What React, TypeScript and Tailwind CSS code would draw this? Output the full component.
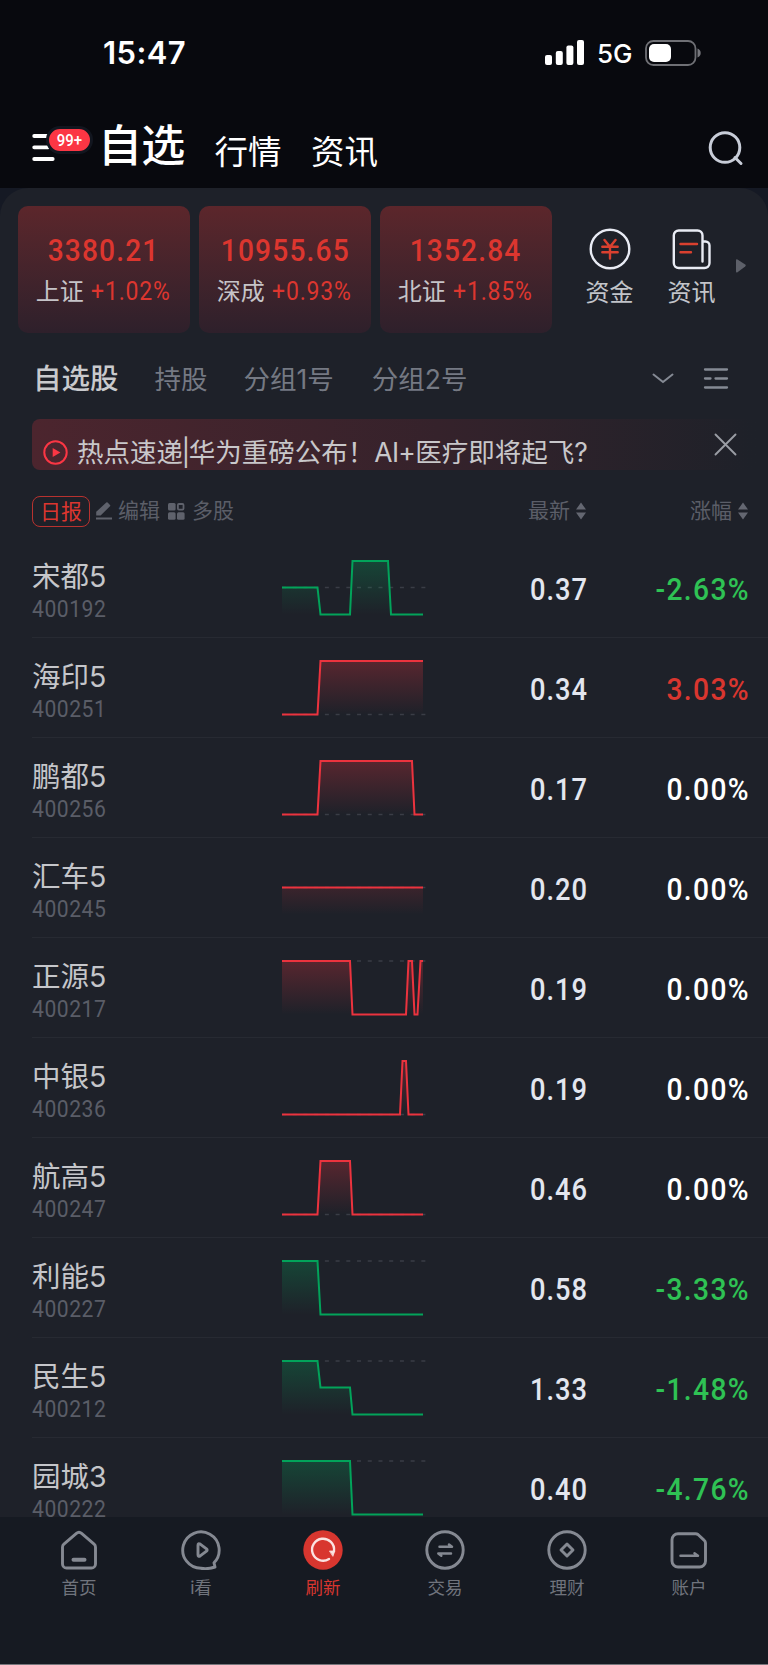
import type { ReactNode } from "react";
import clsx from "clsx";

type Trend = "up" | "down" | "flat";

interface Stock {
  name: string;
  code: string;
  price: string;
  change: string;
  trend: Trend;
  line: "red" | "green";
  base: number;
  points: [number, number][];
}

const TOP = 2;
const MID = 28.5;
const BOT = 55.5;

const indices = [
  { name: "上证", value: "3380.21", change: "+1.02%" },
  { name: "深成", value: "10955.65", change: "+0.93%" },
  { name: "北证", value: "1352.84", change: "+1.85%" },
];

const stocks: Stock[] = [
  {
    name: "宋都5", code: "400192", price: "0.37", change: "-2.63%", trend: "down", line: "green", base: MID,
    points: [[0, MID], [35.5, MID], [38.5, BOT], [68, BOT], [70.5, TOP], [106, TOP], [109, BOT], [141, BOT]],
  },
  {
    name: "海印5", code: "400251", price: "0.34", change: "3.03%", trend: "up", line: "red", base: BOT,
    points: [[0, BOT], [35.5, BOT], [38.5, TOP], [141, TOP]],
  },
  {
    name: "鹏都5", code: "400256", price: "0.17", change: "0.00%", trend: "flat", line: "red", base: BOT,
    points: [[0, BOT], [35.5, BOT], [38.5, TOP], [130, TOP], [132.5, BOT], [141, BOT]],
  },
  {
    name: "汇车5", code: "400245", price: "0.20", change: "0.00%", trend: "flat", line: "red", base: MID,
    points: [[0, MID], [141, MID]],
  },
  {
    name: "正源5", code: "400217", price: "0.19", change: "0.00%", trend: "flat", line: "red", base: TOP,
    points: [
      [0, TOP], [68, TOP], [70.5, BOT], [124, BOT], [126.5, TOP], [130, TOP], [132.5, BOT], [135.5, BOT], [138.5, TOP], [141, TOP],
    ],
  },
  {
    name: "中银5", code: "400236", price: "0.19", change: "0.00%", trend: "flat", line: "red", base: BOT,
    points: [[0, BOT], [118, BOT], [120.5, TOP], [124, TOP], [126.5, BOT], [141, BOT]],
  },
  {
    name: "航高5", code: "400247", price: "0.46", change: "0.00%", trend: "flat", line: "red", base: BOT,
    points: [[0, BOT], [35.5, BOT], [38.5, TOP], [68, TOP], [70.5, BOT], [141, BOT]],
  },
  {
    name: "利能5", code: "400227", price: "0.58", change: "-3.33%", trend: "down", line: "green", base: TOP,
    points: [[0, TOP], [35.5, TOP], [38.5, BOT], [141, BOT]],
  },
  {
    name: "民生5", code: "400212", price: "1.33", change: "-1.48%", trend: "down", line: "green", base: TOP,
    points: [[0, TOP], [35.5, TOP], [38.5, MID], [68, MID], [70.5, BOT], [141, BOT]],
  },
  {
    name: "园城3", code: "400222", price: "0.40", change: "-4.76%", trend: "down", line: "green", base: TOP,
    points: [[0, TOP], [68, TOP], [70.5, BOT], [141, BOT]],
  },
];

const trendColor: Record<Trend, string> = {
  up: "text-[#d9362f]",
  down: "text-[#2fc254]",
  flat: "text-white",
};

// condensed figures for prices and codes
function Num({ children, className }: { children: ReactNode; className?: string }) {
  return <span className={clsx("block font-['Roboto',sans-serif] whitespace-nowrap", className)}>{children}</span>;
}

function StatusBar() {
  return (
    <div className="flex h-[98px] items-start justify-between pt-[33px] pr-[66px] pl-[103px]">
      <span className="text-[31px] leading-10 font-semibold tracking-[0.4px] text-white">15:47</span>
      <div className="flex items-center pt-[6px]">
        <svg width="40" height="26" viewBox="0 0 40 26" fill="#fff">
          <rect x="0" y="15" width="7" height="10" rx="2" />
          <rect x="10.8" y="11" width="7" height="14" rx="2" />
          <rect x="21.4" y="5.5" width="7" height="19.5" rx="2" />
          <rect x="32" y="0" width="7" height="25" rx="2" />
        </svg>
        <span className="ml-[12px] w-[36px] pt-[2px] text-[26px] leading-[26px] font-[450] text-white">5G</span>
        <svg className="ml-[12px]" width="57" height="26" viewBox="0 0 57 26" fill="none">
          <rect x="1" y="1" width="49.5" height="24" rx="7.5" stroke="#6f7075" strokeWidth="1.8" />
          <rect x="4" y="4" width="22" height="18" rx="5" fill="#fff" />
          <path d="M52.5 8.500c2 .6 3.200 2.300 3.200 4.500s-1.200 3.900-3.200 4.500z" fill="#77787d" />
        </svg>
      </div>
    </div>
  );
}

function Header() {
  return (
    <header className="flex h-[90px] items-start pr-[24px] pl-[32px] text-white">
      <div className="relative mt-[34px] h-[32px] w-[66px]">
        <svg width="24" height="32" viewBox="0 0 24 32" stroke="#fff" strokeWidth="3.800" strokeLinecap="round">
          <path d="M2.200 4h20M2.200 15.300h14M2.200 27h18.500" />
        </svg>
        <div className="absolute -top-[6px] left-[14px] flex h-[28px] w-[47px] items-center justify-center rounded-full border-3 border-[#12161f] bg-[#fb3644]">
          <Num className="scale-x-88 pt-px text-[17px] leading-[21px] font-medium">99+</Num>
        </div>
      </div>
      <h1 className="mt-[18px] w-[88px] text-[44px] leading-[60px] font-medium tracking-[-0.800px] whitespace-nowrap">自选</h1>
      <span className="mt-[29px] ml-[28.500px] text-[33.500px] leading-[50px]">行情</span>
      <span className="mt-[29px] ml-[29.500px] text-[33.500px] leading-[50px]">资讯</span>
      <svg className="mt-[32px] ml-auto" width="36" height="36" viewBox="0 0 36 36" fill="none" stroke="#c8cdd8" strokeWidth="3">
        <circle cx="17" cy="17.500" r="14.800" />
        <path d="m27 27.500 6 6" strokeLinecap="round" />
      </svg>
    </header>
  );
}

function IndexStrip() {
  return (
    <div className="flex h-[145px] items-start gap-[9px] pt-[17.500px] pl-[18px]">
      {indices.map((item) => (
        <div
          key={item.name}
          className="flex h-[127px] w-[172px] shrink-0 flex-col items-center rounded-[10px] bg-linear-to-b from-[#5c262b] to-[#2e202b]"
        >
          <Num className="mt-[25px] scale-x-88 text-[32px] leading-[38px] font-medium tracking-[1.300px] text-[#dc362f]">{item.value}</Num>
          <div className="mt-[5px] flex items-center gap-[7px]">
            <span className="text-[24px] leading-[36px] text-[#c6c4c8]">{item.name}</span>
            <Num className="-mr-[5px] origin-left scale-x-92 text-[25px] leading-[36px] font-[450] tracking-[0.900px] text-[#dc362f]">{item.change}</Num>
          </div>
        </div>
      ))}
      <div className="ml-[25px] flex w-[48px] flex-col items-center pt-[22px] whitespace-nowrap">
        <svg width="42" height="42" viewBox="0 0 42 42" fill="none">
          <circle cx="21" cy="21" r="19.300" stroke="#e8ebf4" strokeWidth="2.400" />
          <path d="m15.500 12 5.500 6.800 5.500-6.800M21 18.800v11.700M13.300 18.800h15.400M13.300 24.300h15.400" stroke="#d9402f" strokeWidth="2.400" strokeLinecap="round" />
        </svg>
        <span className="mt-[5.500px] -ml-px text-[24px] leading-[36px] text-[#c2c4c9]">资金</span>
      </div>
      <div className="ml-[25px] flex w-[48px] flex-col items-center pt-[22px] whitespace-nowrap">
        <svg width="42" height="42" viewBox="0 0 42 42" fill="none" strokeWidth="2.400" strokeLinecap="round">
          <path d="M31.500 33.500V7.500a5 5 0 0 0-5-5H7.800a5 5 0 0 0-5 5V35a5 5 0 0 0 5 5h25.700a5 5 0 0 0 5-5V17.500a4 4 0 0 0-4-4h-3" stroke="#e8ebf4" />
          <path d="M9.500 16h16.500M9.500 24.300h10.500" stroke="#d9402f" />
        </svg>
        <span className="mt-[5.500px] -ml-px text-[24px] leading-[36px] text-[#c2c4c9]">资讯</span>
      </div>
      <svg className="mt-[52.500px] ml-[10px]" width="12" height="16" viewBox="0 0 12 16" fill="#5d6069">
        <path d="M1 2.200Q1 .6 2.500 1.400l7.700 5.200q1.300 1 0 2l-7.700 5.600Q1 15 1 13.400z" />
      </svg>
    </div>
  );
}

function GroupTabs() {
  return (
    <div className="flex h-[86px] items-center pt-[5px] pr-[39px] pl-[33px] text-[26.500px] leading-[40px] text-[#757983]">
      <span className="text-[28.500px] font-medium text-[#c9cacd]">自选股</span>
      <span className="ml-[36px]">持股</span>
      <span className="ml-[36px]">分组1号</span>
      <span className="ml-[38px]">分组2号</span>
      <svg className="ml-auto" width="22" height="12" viewBox="0 0 22 12" fill="none" stroke="#858a94" strokeWidth="2">
        <path d="m1.500 1.500 9.500 7.500 9.500-7.500" strokeLinecap="round" />
      </svg>
      <svg className="ml-[29px]" width="26" height="24" viewBox="0 0 26 24" stroke="#858a94" strokeWidth="2.300" strokeLinecap="round">
        <path d="M2 2.500h22M2 11.500h5.500M12.500 11.500H24M2 20.500h22" />
      </svg>
    </div>
  );
}

function HotNews() {
  return (
    <div className="ml-[32px] flex h-[51px] items-start rounded-lg bg-linear-to-r from-[#4c252e] from-0% via-[#35222b] via-55% to-[#1e2129] to-98%">
      <svg className="mt-[21px] ml-[11px] shrink-0" width="25" height="25" viewBox="0 0 25 25">
        <circle cx="12.500" cy="12.500" r="11.200" fill="none" stroke="#fb3644" strokeWidth="2" />
        <path d="M9.700 8v9l7.700-4.500z" fill="#fb3644" />
      </svg>
      <span className="mt-[13px] ml-[9px] text-[26.500px] leading-[40px] whitespace-nowrap text-[#c8c7ca]">
        热点速递<span className="-mx-[1.500px]">|</span>华为重磅公布！
        <span className="tracking-[-0.700px]">AI+</span>医疗即将起飞?
      </span>
      <svg className="mt-[14px] mr-[31px] ml-auto" width="23" height="23" viewBox="0 0 23 23" stroke="#9a9da4" strokeWidth="1.900" strokeLinecap="round">
        <path d="m1.500 1.500 20 20M21.500 1.500l-20 20" />
      </svg>
    </div>
  );
}

function SortIcon() {
  return (
    <svg width="12" height="18" viewBox="0 0 12 18" fill="#646771">
      <path d="M6 .5 11 7.500H1zM6 17.500 1 10.500h10z" />
    </svg>
  );
}

function ColumnBar() {
  return (
    <div className="flex h-[68px] items-center pt-[14px] pr-[19px] pl-[32px] text-[21px] leading-[30px] text-[#5b5e68]">
      <span className="h-[31px] w-[58px] rounded-[8px] border border-[#b8322f] text-center leading-[29px] text-[#dc362f]">日报</span>
      <svg className="ml-[5px]" width="18" height="18" viewBox="0 0 18 18" fill="#5f626c">
        <path d="M12.600.6 15 3q.6.7 0 1.300L5.600 13.400H1.200V9.800L11.300.6q.7-.6 1.300 0zM1 15.600h16v1.900H1z" />
      </svg>
      <span className="ml-[5px]">编辑</span>
      <svg className="ml-[8px]" width="17" height="17" viewBox="0 0 17 17" fill="#5f626c">
        <rect x="0" y="0" width="7.600" height="7.600" rx="1.500" />
        <rect x="9.900" y="1" width="5.600" height="5.600" rx="1" fill="none" stroke="#5f626c" strokeWidth="1.800" />
        <rect x="0" y="9.200" width="7.600" height="7.600" rx="1.500" />
        <rect x="9" y="9.200" width="7.600" height="7.600" rx="1.500" />
      </svg>
      <span className="ml-[7px]">多股</span>
      <div className="ml-auto flex items-center gap-[5px]">
        最新
        <SortIcon />
      </div>
      <div className="flex w-[162px] items-center justify-end gap-[5px]">
        涨幅
        <SortIcon />
      </div>
    </div>
  );
}

function Sparkline({ stock }: { stock: Stock }) {
  const path = stock.points.map(([x, y], i) => `${i ? "L" : "M"}${x} ${y}`).join("");
  const stroke = stock.line === "red" ? "#eb333e" : "#02a35a";
  return (
    <svg width="145" height="58" viewBox="0 0 145 58" fill="none">
      <path d={`M0 ${stock.base}H143.500`} stroke="#3a3d46" strokeWidth="1.700" strokeDasharray="4 6.720" />
      <path d={`${path}V${BOT}H0Z`} fill={`url(#fill-${stock.line})`} />
      <path d={path} stroke={stroke} strokeWidth="2" />
    </svg>
  );
}

function StockRow({ stock }: { stock: Stock }) {
  return (
    <li className="ml-[32px] flex h-[100px] shrink-0 items-start border-b border-[#272a32]">
      <div className="flex w-[250px] flex-col pt-[19px]">
        <span className="text-[28.500px] leading-[40px] text-[#c5c6ca]">{stock.name}</span>
        <Num className="-mt-px origin-left scale-x-88 text-[24px] leading-[26px] font-[450] tracking-[0.600px] text-[#5a5d67]">{stock.code}</Num>
      </div>
      <div className="pt-[21px]">
        <Sparkline stock={stock} />
      </div>
      <Num className="w-[161px] origin-right scale-x-88 pt-[33px] text-right text-[31px] leading-[38px] font-medium tracking-[1.100px] text-[#e3e6ef]">
        {stock.price}
      </Num>
      <Num
        className={clsx(
          "w-[162px] origin-right scale-x-91 pt-[33px] text-right text-[31px] leading-[38px] font-medium tracking-[1.500px]",
          trendColor[stock.trend],
        )}
      >
        {stock.change}
      </Num>
    </li>
  );
}

const navItems: { label: string; icon: ReactNode; active?: boolean }[] = [
  {
    label: "首页",
    icon: (
      <>
        <path d="M3.500 17.200a4 4 0 0 1 1.400-3L17.400 3.300a4 4 0 0 1 5.200 0l12.500 10.900a4 4 0 0 1 1.400 3V34a4 4 0 0 1-4 4h-25a4 4 0 0 1-4-4z" />
        <path d="M14.500 29.700h11" strokeWidth="4" />
      </>
    ),
  },
  {
    label: "i看",
    icon: (
      <>
        <path d="M33 32.800A18.200 18.200 0 1 0 20 38.300q6.500 1.200 14-1.300z" />
        <path d="M17 15.300v9.400q0 2.500 2.200 1.200l6.300-4.700q1.300-1.200 0-2.400l-6.300-4.700Q17 12.800 17 15.300z" />
      </>
    ),
  },
  {
    label: "刷新",
    active: true,
    icon: (
      <>
        <circle cx="20" cy="20" r="19.700" fill="#d8362f" stroke="none" />
        <path d="M26 29A11 11 0 1 1 31 21" stroke="#fbe3e2" strokeWidth="2.400" />
        <path d="M26.800 21h5l-1.800 5z" fill="#fbe3e2" stroke="#fbe3e2" strokeWidth="0.800" />
      </>
    ),
  },
  {
    label: "交易",
    icon: (
      <>
        <circle cx="20" cy="20" r="18.200" />
        <path d="M14.500 16.700h12.500l-3-2.200M26 23.600H13.300l3 2.200" strokeWidth="2.500" />
      </>
    ),
  },
  {
    label: "理财",
    icon: (
      <>
        <circle cx="20" cy="20" r="18.200" />
        <path d="m20 14 6 6-6 6-6-6z" />
      </>
    ),
  },
  {
    label: "账户",
    icon: (
      <>
        <path d="M9 3.700h17.500a4 4 0 0 1 2.500.8l6 5.600a4 4 0 0 1 1.500 3V31a6 6 0 0 1-6 6H9a6 6 0 0 1-6-6V9.700a6 6 0 0 1 6-6z" />
        <path d="M11.500 25.700h17.500l-3.500-2.400" strokeWidth="2.500" />
      </>
    ),
  },
];

function BottomNav() {
  return (
    <nav className="flex h-[148px] shrink-0 border-b border-[#77767c] bg-[#161a22] px-[18px] pt-[12.500px]">
      {navItems.map((item) => (
        <div key={item.label} className={clsx("flex flex-1 flex-col items-center", item.active ? "text-[#d8362f]" : "text-[#70747d]")}>
          <svg
            width="40"
            height="40"
            viewBox="0 0 40 40"
            fill="none"
            stroke="#858992"
            strokeWidth="2.900"
            strokeLinecap="round"
            strokeLinejoin="round"
          >
            {item.icon}
          </svg>
          <span className="mt-[5.500px] text-[17.500px] leading-[26px]">{item.label}</span>
        </div>
      ))}
    </nav>
  );
}

export default function App() {
  return (
    <div className="flex h-[1665px] w-[768px] flex-col overflow-hidden bg-[#08090e] font-['Inter','Noto_Sans_CJK_SC',sans-serif]">
      <svg className="absolute" width="0" height="0">
        <defs>
          <linearGradient id="fill-red" gradientUnits="userSpaceOnUse" x1="0" y1="2" x2="0" y2="55.500">
            <stop offset="0" stopColor="#eb333e" stopOpacity="0.28" />
            <stop offset="1" stopColor="#eb333e" stopOpacity="0" />
          </linearGradient>
          <linearGradient id="fill-green" gradientUnits="userSpaceOnUse" x1="0" y1="2" x2="0" y2="55.500">
            <stop offset="0" stopColor="#02a35a" stopOpacity="0.28" />
            <stop offset="1" stopColor="#02a35a" stopOpacity="0" />
          </linearGradient>
        </defs>
      </svg>
      <StatusBar />
      <Header />
      <div className="flex min-h-0 flex-1 flex-col bg-[#151924]">
        <main className="flex min-h-0 flex-1 flex-col overflow-hidden rounded-t-[28px] bg-[#1e2129]">
          <IndexStrip />
          <GroupTabs />
          <HotNews />
          <ColumnBar />
          <ul className="flex min-h-0 flex-1 flex-col overflow-hidden">
            {stocks.map((stock) => (
              <StockRow key={stock.code} stock={stock} />
            ))}
          </ul>
        </main>
        <BottomNav />
      </div>
    </div>
  );
}
